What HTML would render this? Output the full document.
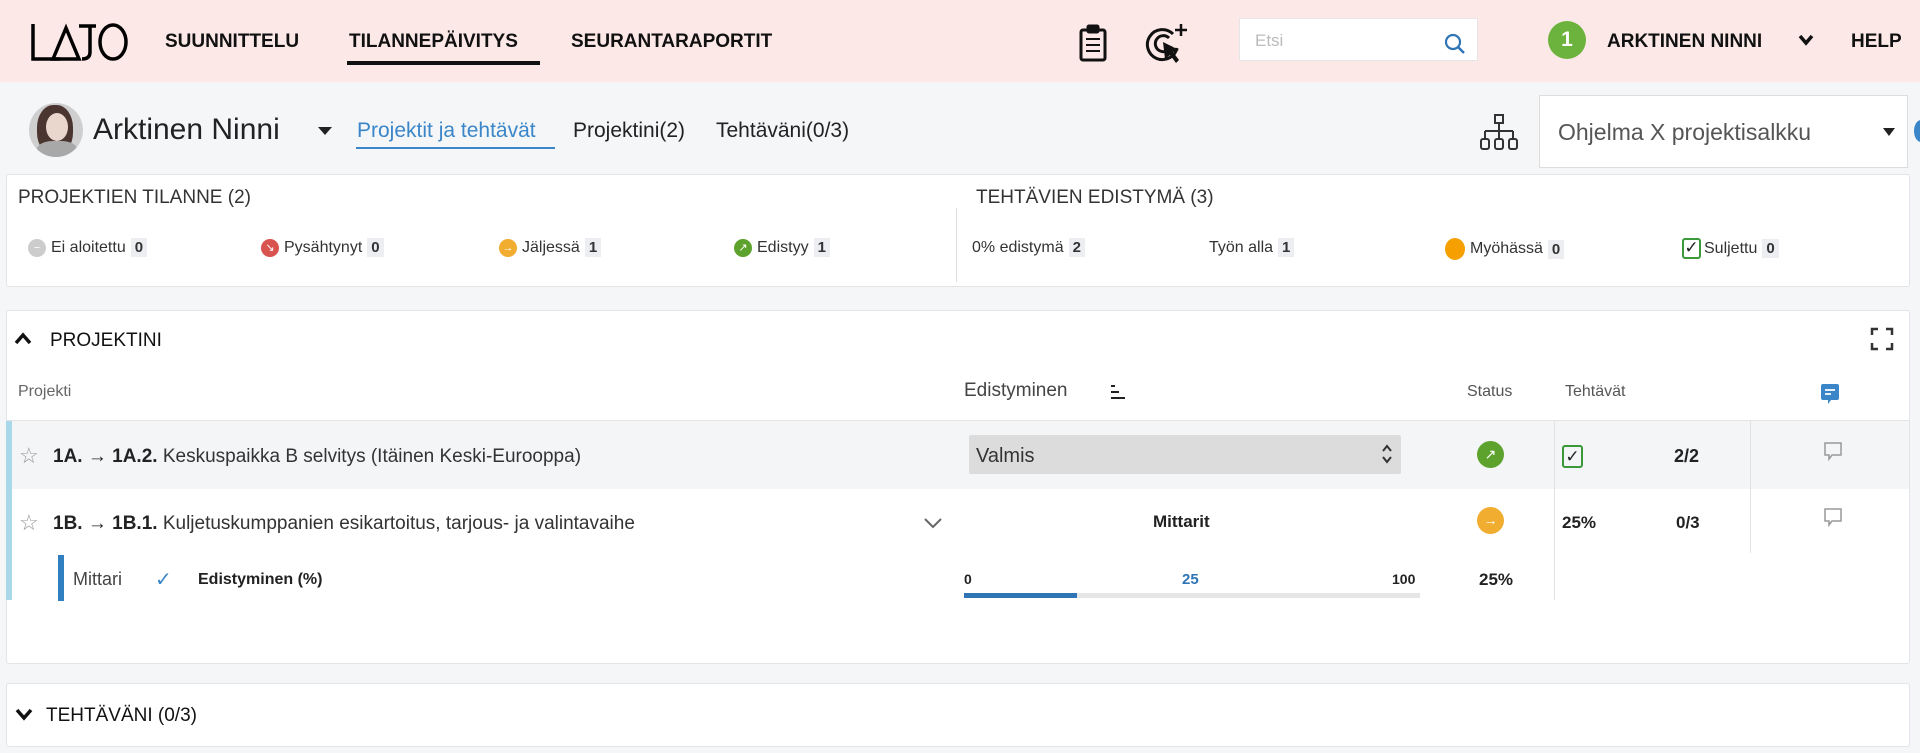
<!DOCTYPE html>
<html><head><meta charset="utf-8">
<style>
*{margin:0;padding:0;box-sizing:border-box}
body{width:1920px;height:753px;background:#f4f6f8;font-family:"Liberation Sans",Arial,sans-serif;color:#222;position:relative;overflow:hidden}
.a{position:absolute;white-space:nowrap}
.hdr{position:absolute;left:0;top:0;width:1920px;height:82px;background:#fde8e8}
.nav{font-size:19px;font-weight:bold;color:#111;top:31px}
.card{position:absolute;background:#fff;border:1px solid #e2e4e7;border-radius:3px}
.badge{display:inline-block;background:#eceef1;font-weight:bold;padding:0 4px;margin-left:5px;font-size:15px;line-height:19px}
.it{font-size:16px;color:#333;top:238px;display:flex;align-items:center}
.dot{display:inline-block;width:18px;height:18px;border-radius:50%;margin-right:5px;color:#fff;font-size:11px;text-align:center;line-height:18px}
.row{font-size:19px;color:#333}
.b{font-weight:bold;color:#222}
</style></head><body>
<div class="hdr"></div>
<svg class="a" style="left:30px;top:22px" width="100" height="40" viewBox="0 0 100 40">
<g fill="none" stroke="#000" stroke-width="3.5">
<path d="M3 2 V37 H30"/>
<path d="M23 37 L36 6 L49 37 Z"/>
<path d="M49 4 H66 M60 4 V30 Q60 37 52 37"/>
<ellipse cx="83" cy="20" rx="13" ry="17"/>
</g></svg>
<div class="a nav" style="left:165px">SUUNNITTELU</div>
<div class="a nav" style="left:349px">TILANNEPÄIVITYS</div>
<div class="a" style="left:347px;top:61px;width:193px;height:4px;background:#111"></div>
<div class="a nav" style="left:571px">SEURANTARAPORTIT</div>
<svg class="a" style="left:1078px;top:24px" width="30" height="38" viewBox="0 0 30 38"><g fill="none" stroke="#111" stroke-width="3"><rect x="3" y="6" width="24" height="30" rx="2"/><rect x="10" y="2" width="10" height="6" rx="1" fill="#111"/><path d="M8 15h14M8 21h14M8 27h14" stroke-width="2"/></g></svg>
<svg class="a" style="left:1145px;top:22px" width="44" height="42" viewBox="0 0 44 42"><g fill="none" stroke="#111" stroke-width="3"><path d="M28 12 A15 15 0 1 0 32 26"/><path d="M24 16 A8 8 0 1 0 26 24"/><path d="M36 2v12M30 8h12" stroke-width="2.5"/></g><path d="M18 20 L34 28 L28 30 L34 38 L31 41 L25 33 L20 37 Z" fill="#111"/></svg>
<div class="a" style="left:1239px;top:18px;width:239px;height:43px;background:#fff;border:1px solid #e6e6e6"></div>
<div class="a" style="left:1255px;top:31px;font-size:17px;color:#bbb">Etsi</div>
<svg class="a" style="left:1443px;top:32px" width="24" height="24" viewBox="0 0 24 24"><circle cx="10" cy="10" r="7" fill="none" stroke="#2f74b5" stroke-width="2.2"/><path d="M15 15l6 6" stroke="#2f74b5" stroke-width="2.5"/></svg>
<div class="a" style="left:1548px;top:21px;width:38px;height:38px;border-radius:50%;background:#6bb33c;color:#fff;font-weight:bold;font-size:21px;text-align:center;line-height:38px">1</div>
<div class="a nav" style="left:1607px">ARKTINEN NINNI</div>
<svg class="a" style="left:1798px;top:34px" width="16" height="12" viewBox="0 0 16 12"><path d="M2 2l6 7 6-7" fill="none" stroke="#111" stroke-width="3.5"/></svg>
<div class="a nav" style="left:1851px">HELP</div>

<div class="a" style="left:29px;top:103px;width:54px;height:54px;border-radius:50%;overflow:hidden;background:#cfcfcf">
<div class="a" style="left:8px;top:2px;width:36px;height:50px;border-radius:45%;background:#4a3530"></div>
<div class="a" style="left:17px;top:10px;width:22px;height:28px;border-radius:50%;background:#e9d6cc"></div>
<div class="a" style="left:8px;top:38px;width:40px;height:20px;border-radius:40%;background:#a8a8a8"></div>
</div>
<div class="a" style="left:93px;top:113px;font-size:30px;color:#222">Arktinen Ninni</div>
<svg class="a" style="left:317px;top:126px" width="16" height="10"><path d="M1 1h14L8 9z" fill="#222"/></svg>
<div class="a" style="left:357px;top:119px;font-size:21px;color:#3a86c8">Projektit ja tehtävät</div>
<div class="a" style="left:356px;top:147px;width:199px;height:2px;background:#3a86c8"></div>
<div class="a" style="left:573px;top:119px;font-size:21px;color:#222">Projektini(2)</div>
<div class="a" style="left:716px;top:119px;font-size:21px;color:#222">Tehtäväni(0/3)</div>
<svg class="a" style="left:1479px;top:113px" width="40" height="38" viewBox="0 0 40 38"><g fill="none" stroke="#333" stroke-width="2"><rect x="16" y="2" width="8" height="8"/><path d="M20 10v8M6 18h28M6 18v8M20 18v8M34 18v8"/><rect x="2" y="26" width="8" height="10" rx="2"/><rect x="16" y="26" width="8" height="10" rx="2"/><rect x="30" y="26" width="8" height="10" rx="2"/></g></svg>
<div class="a" style="left:1539px;top:95px;width:369px;height:73px;background:#fff;border:1px solid #ddd"></div>
<div class="a" style="left:1558px;top:119px;font-size:23px;color:#555">Ohjelma X projektisalkku</div>
<svg class="a" style="left:1882px;top:127px" width="14" height="10"><path d="M1 1h12L7 9z" fill="#222"/></svg>
<div class="a" style="left:1914px;top:120px;width:14px;height:22px;border-radius:50%;background:#3a86c8"></div>

<div class="card" style="left:6px;top:174px;width:1904px;height:113px"></div>
<div class="a" style="left:18px;top:187px;font-size:19px;color:#333">PROJEKTIEN TILANNE (2)</div>
<div class="a" style="left:976px;top:187px;font-size:19px;color:#333">TEHTÄVIEN EDISTYMÄ (3)</div>
<div class="a" style="left:956px;top:208px;width:1px;height:74px;background:#ddd"></div>
<div class="a it" style="left:28px"><span class="dot" style="background:#ccc">−</span>Ei aloitettu<span class="badge">0</span></div>
<div class="a it" style="left:261px"><span class="dot" style="background:#d9534f">↘</span>Pysähtynyt<span class="badge">0</span></div>
<div class="a it" style="left:499px"><span class="dot" style="background:#f0ad30">→</span>Jäljessä<span class="badge">1</span></div>
<div class="a it" style="left:734px"><span class="dot" style="background:#5ea22e">↗</span>Edistyy<span class="badge">1</span></div>
<div class="a it" style="left:972px">0% edistymä<span class="badge">2</span></div>
<div class="a it" style="left:1209px">Työn alla<span class="badge">1</span></div>
<div class="a it" style="left:1445px"><span class="dot" style="background:#f5a000;width:20px;height:22px"></span>Myöhässä<span class="badge">0</span></div>
<div class="a it" style="left:1682px"><span style="display:inline-block;width:19px;height:21px;border:2px solid #3a9a3a;border-radius:3px;color:#222;font-size:17px;line-height:16px;text-align:center;margin-right:3px">✓</span>Suljettu<span class="badge">0</span></div>

<div class="card" style="left:6px;top:310px;width:1904px;height:354px"></div>
<svg class="a" style="left:14px;top:332px" width="18" height="14"><path d="M2 11l7-8 7 8" fill="none" stroke="#111" stroke-width="3.5"/></svg>
<div class="a" style="left:50px;top:330px;font-size:19px;color:#111">PROJEKTINI</div>
<svg class="a" style="left:1870px;top:327px" width="24" height="24" viewBox="0 0 24 24"><path d="M2 8V2h6M16 2h6v6M22 16v6h-6M8 22H2v-6" fill="none" stroke="#333" stroke-width="2.5"/></svg>
<div class="a" style="left:18px;top:383px;font-size:16px;color:#666">Projekti</div>
<div class="a" style="left:964px;top:380px;font-size:19px;color:#444">Edistyminen</div>
<svg class="a" style="left:1109px;top:383px" width="18" height="18"><path d="M2 3h4M2 9h8M2 15h14" stroke="#222" stroke-width="2"/></svg>
<div class="a" style="left:1467px;top:383px;font-size:16px;color:#555">Status</div>
<div class="a" style="left:1565px;top:383px;font-size:16px;color:#555">Tehtävät</div>
<svg class="a" style="left:1819px;top:383px" width="22" height="24" viewBox="0 0 22 24"><path d="M2 3q0-2 2-2h14q2 0 2 2v12q0 2-2 2h-6l-3 4v-4H4q-2 0-2-2z" fill="#3a86c8"/><path d="M6 7h10M6 11h6" stroke="#fff" stroke-width="1.8"/></svg>
<div class="a" style="left:7px;top:420px;width:1902px;height:1px;background:#e4e4e4"></div>
<div class="a" style="left:7px;top:421px;width:1902px;height:68px;background:#f4f5f7"></div>
<div class="a" style="left:6px;top:421px;width:6px;height:179px;background:#a9d9e8"></div>
<div class="a" style="left:1554px;top:421px;width:1px;height:179px;background:#e2e2e2"></div>
<div class="a" style="left:1750px;top:421px;width:1px;height:132px;background:#e2e2e2"></div>
<div class="a row" style="left:19px;top:443px;color:#999;font-size:22px">☆</div>
<div class="a row" style="left:53px;top:446px"><span class="b">1A. → 1A.2.</span> Keskuspaikka B selvitys (Itäinen Keski-Eurooppa)</div>
<div class="a" style="left:969px;top:435px;width:432px;height:39px;background:#dcdcdc;border-radius:2px"></div>
<div class="a" style="left:976px;top:445px;font-size:20px;color:#333">Valmis</div>
<svg class="a" style="left:1381px;top:443px" width="12" height="22"><path d="M2 8l4-5 4 5M2 14l4 5 4-5" fill="none" stroke="#333" stroke-width="2"/></svg>
<div class="a" style="left:1477px;top:441px;width:27px;height:27px;border-radius:50%;background:#5ea22e;color:#fff;text-align:center;line-height:27px;font-size:14px">↗</div>
<div class="a" style="left:1562px;top:445px;width:21px;height:23px;border:2px solid #3a9a3a;border-radius:3px;text-align:center;font-size:17px;line-height:19px;color:#222">✓</div>
<div class="a row b" style="left:1674px;top:446px;font-size:18px">2/2</div>
<svg class="a" style="left:1823px;top:441px" width="20" height="22"><path d="M2 2h16v12H9l-3 4v-4H2z" fill="none" stroke="#999" stroke-width="1.5"/></svg>
<div class="a row" style="left:19px;top:510px;color:#999;font-size:22px">☆</div>
<div class="a row" style="left:53px;top:513px"><span class="b">1B. → 1B.1.</span> Kuljetuskumppanien esikartoitus, tarjous- ja valintavaihe</div>
<svg class="a" style="left:923px;top:517px" width="20" height="12"><path d="M2 2l8 8 8-8" fill="none" stroke="#666" stroke-width="2"/></svg>
<div class="a b" style="left:1153px;top:512px;font-size:17px">Mittarit</div>
<div class="a" style="left:1477px;top:507px;width:27px;height:27px;border-radius:50%;background:#f0ad30;color:#fff;text-align:center;line-height:27px;font-size:14px">→</div>
<div class="a b" style="left:1562px;top:513px;font-size:17px">25%</div>
<div class="a b" style="left:1676px;top:513px;font-size:17px">0/3</div>
<svg class="a" style="left:1823px;top:507px" width="20" height="22"><path d="M2 2h16v12H9l-3 4v-4H2z" fill="none" stroke="#999" stroke-width="1.5"/></svg>
<div class="a" style="left:58px;top:555px;width:6px;height:46px;background:#2f7fc1"></div>
<div class="a" style="left:73px;top:569px;font-size:18px;color:#444">Mittari</div>
<div class="a" style="left:155px;top:567px;font-size:20px;color:#3a86c8">✓</div>
<div class="a b" style="left:198px;top:571px;font-size:16px">Edistyminen (%)</div>
<div class="a b" style="left:964px;top:571px;font-size:14px">0</div>
<div class="a b" style="left:1182px;top:571px;font-size:15px;color:#2f74b5">25</div>
<div class="a b" style="left:1392px;top:571px;font-size:14px">100</div>
<div class="a" style="left:964px;top:593px;width:456px;height:5px;background:#e6e6e6"></div>
<div class="a" style="left:964px;top:593px;width:113px;height:5px;background:#2f74b5"></div>
<div class="a b" style="left:1479px;top:570px;font-size:17px">25%</div>

<div class="card" style="left:6px;top:683px;width:1904px;height:64px"></div>
<svg class="a" style="left:15px;top:707px" width="18" height="14"><path d="M2 3l7 8 7-8" fill="none" stroke="#111" stroke-width="3.5"/></svg>
<div class="a" style="left:46px;top:705px;font-size:19px;color:#111">TEHTÄVÄNI (0/3)</div>
</body></html>
